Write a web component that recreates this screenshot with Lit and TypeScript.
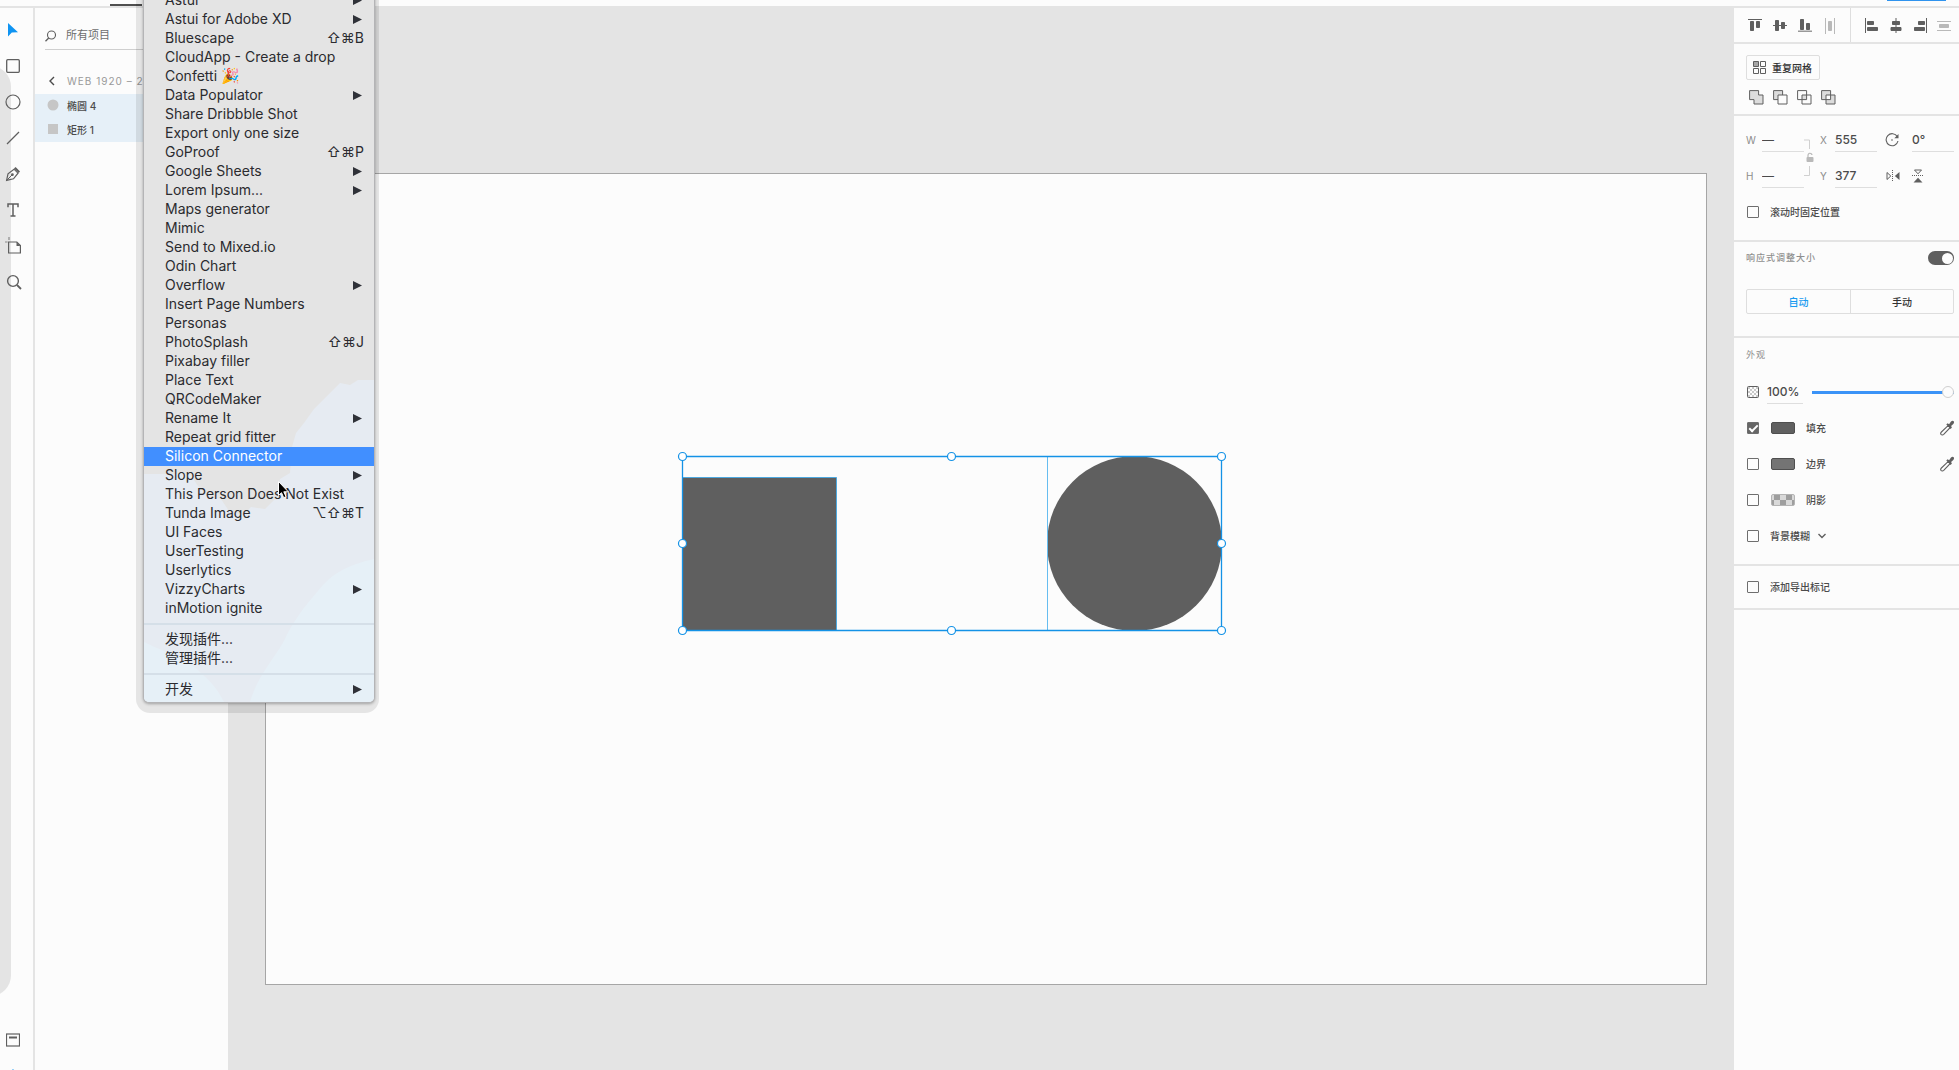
import { LitElement, html, svg, css, nothing, TemplateResult, SVGTemplateResult } from "lit";
import { customElement, property, state } from "lit/decorators.js";
import { classMap } from "lit/directives/class-map.js";

const icon = (w: number, h: number, body: SVGTemplateResult) =>
  html`<svg width=${w} height=${h} viewBox="0 0 ${w} ${h}" fill="none" aria-hidden="true">${body}</svg>`;

const INK = "#5f5f5f";
const PALE = "#b9b9b9";

const base = css`
  :host {
    font-family: Inter, "Noto Sans CJK SC", "Liberation Sans", sans-serif;
    color: #4b4b4b;
  }
  * {
    box-sizing: border-box;
  }
  button,
  input {
    font: inherit;
    color: inherit;
    margin: 0;
    padding: 0;
    border: 0;
    background: none;
    border-radius: 0;
    outline: none;
  }
  svg {
    display: block;
    flex: none;
  }
  h2 {
    margin: 0;
    font-weight: 400;
  }
`;

/* ---------- tool strip ---------- */

const tools: { name: string; art: TemplateResult }[] = [
  { name: "选择", art: icon(16, 16, svg`<path d="M3 1v13.500l3.800-4 6.200-.3z" fill="#0f94f2"/>`) },
  { name: "矩形", art: icon(16, 16, svg`<rect x="1.700" y="1.700" width="12.600" height="12.600" rx="1" stroke=${INK} stroke-width="1.300"/>`) },
  { name: "椭圆", art: icon(16, 16, svg`<circle cx="8" cy="8" r="7" stroke=${INK} stroke-width="1.200"/>`) },
  { name: "直线", art: icon(16, 16, svg`<path d="M2 14 14 2" stroke=${INK} stroke-width="1.200"/>`) },
  {
    name: "钢笔",
    art: icon(
      16,
      16,
      svg`<path d="M1.600 14.400 3 7.800 9 3.200l4 4-4.500 5.600z" stroke=${INK} stroke-width="1.200"/>
      <path d="M1.600 14.400 7 9" stroke=${INK}/><circle cx="7.400" cy="8.700" r="1.400" fill=${INK}/>
      <path d="m9 2.500 1.600-1.400 4.400 4.300-1.300 1.700z" fill=${INK}/>`,
    ),
  },
  {
    name: "文本",
    art: icon(16, 16, svg`<path d="M3 5.200V2h10v3.200M8 2v12M5.500 14h5" stroke=${INK} stroke-width="1.500"/>`),
  },
  {
    name: "画板",
    art: icon(
      20,
      18,
      svg`<path d="M5.600 5h8.200l3.600 3.600V16H5.600z" stroke=${INK} stroke-width="1.200"/>
      <path d="M13.500 5v3.900h3.900z" fill=${INK}/><path d="M6 0v3M2 5h2.600" stroke="#8a8a8a" stroke-width="1.200"/>`,
    ),
  },
  {
    name: "缩放",
    art: icon(18, 18, svg`<circle cx="9" cy="8" r="5.400" stroke=${INK} stroke-width="1.400"/><path d="m13 12 4 4" stroke=${INK} stroke-width="1.800"/>`),
  },
];

const footTools = [
  { name: "资源", art: icon(14, 14, svg`<rect x=".5" y="1" width="13" height="12" stroke=${INK} stroke-width="1.200"/><path d="M3 4.500h8" stroke=${INK} stroke-width="2"/>`) },
  { name: "图层", art: icon(14, 14, svg`<path d="M7 1 13 5 7 9 1 5zM1 8.500l6 4 6-4" stroke="#0f94f2" stroke-width="1.200"/>`) },
];

@customElement("tool-strip")
export class ToolStrip extends LitElement {
  static styles = [
    base,
    css`
      :host {
        display: flex;
        flex-direction: column;
        width: 35px;
        padding-top: 4px;
        border-right: 2px solid #e4e4e4;
        position: relative;
      }
      .edge {
        position: absolute;
        left: -30px;
        top: 58px;
        bottom: 74px;
        width: 41px;
        border-radius: 32px;
        background: #e4e4e4;
      }
      .tool {
        display: flex;
        align-items: center;
        justify-content: center;
        position: relative;
        width: 26px;
        height: 36px;
        flex: none;
      }
      .foot {
        margin-top: auto;
        margin-bottom: -24px;
      }
    `,
  ];
  render() {
    return html`<div class="edge"></div>
      ${tools.map((t) => html`<button class="tool" aria-label=${t.name}>${t.art}</button>`)}
      <div class="foot">${footTools.map((t) => html`<button class="tool" aria-label=${t.name}>${t.art}</button>`)}</div>`;
  }
}

/* ---------- layers ---------- */

@customElement("layer-panel")
export class LayerPanel extends LitElement {
  static styles = [
    base,
    css`
      :host {
        display: block;
        width: 193px;
        padding-top: 14px;
        font-size: 10px;
      }
      .search {
        display: flex;
        align-items: center;
        gap: 10px;
        height: 28px;
        margin: 0 10px;
        border-bottom: 1px solid #cfcfcf;
      }
      .search input {
        width: 100px;
        padding-bottom: 2px;
        font-size: 11px;
      }
      .search input::placeholder {
        color: #6e6e6e;
        opacity: 1;
      }
      .path {
        display: flex;
        align-items: center;
        gap: 12px;
        height: 26px;
        margin-top: 18px;
        padding-left: 14px;
        color: #999;
        letter-spacing: 1px;
      }
      .path h2 {
        font-size: 10px;
      }
      .layers {
        margin: 0;
        padding: 0;
        list-style: none;
        background: #e6f0f8;
      }
      .layer {
        display: flex;
        align-items: center;
        gap: 9px;
        width: 100%;
        height: 24px;
        padding-left: 13px;
        padding-bottom: 2px;
        font-weight: 500;
      }
      .mark {
        width: 10px;
        height: 10px;
        background: #c6c6c6;
      }
      .round {
        border-radius: 50%;
        transform: scale(1.1);
      }
    `,
  ];
  render() {
    return html`
      <label class="search">
        ${icon(11, 12, svg`<circle cx="6.500" cy="5" r="4" stroke=${INK} stroke-width="1.100"/><path d="M3.700 8 .5 11.300" stroke=${INK} stroke-width="1.300"/>`)}
        <input type="text" placeholder="所有项目" aria-label="所有项目" />
      </label>
      <div class="path">
        <button aria-label="返回">${icon(6, 10, svg`<path d="M5 1 1 5l4 4" stroke="#4b4b4b" stroke-width="1.400"/>`)}</button>
        <h2>WEB 1920 – 2</h2>
      </div>
      <ul class="layers">
        <li><button class="layer"><span class="mark round"></span>椭圆 4</button></li>
        <li><button class="layer"><span class="mark"></span>矩形 1</button></li>
      </ul>
    `;
  }
}

/* ---------- canvas ---------- */

@customElement("design-canvas")
export class DesignCanvas extends LitElement {
  static styles = [
    base,
    css`
      :host {
        display: flex;
        flex: 1;
        padding: 165px 27px 85px 37px;
        background: #e4e4e4;
      }
      .artboard {
        flex: 1;
        position: relative;
        border: 1px solid #a6a6a6;
        background: #fcfcfc;
      }
      .drawing {
        position: absolute;
        left: 408px;
        top: 274px;
      }
    `,
  ];
  render() {
    const handles = [
      [8, 8], [277, 8], [547, 8],
      [8, 95], [547, 95],
      [8, 182], [277, 182], [547, 182],
    ];
    return html`<main class="artboard">
      <svg class="drawing" width="556" height="192" viewBox="0 0 556 192" role="img" aria-label="矩形 1, 椭圆 4">
        <path d="M8.500 29.500h154v153h-154z" fill="#5f5f5f" stroke="#4da9e0" />
        <circle cx="460.500" cy="95.500" r="87.500" fill="#5f5f5f" />
        <path d="M373.500 8v174" stroke="#66bdf0" />
        <path d="M8.500 8.500h539v174h-539z" fill="none" stroke="#1492e6" stroke-width="1.300" />
        ${handles.map(([x, y]) => svg`<circle cx=${x + 0.5} cy=${y + 0.5} r="4" fill="#fff" stroke="#1492e6" stroke-width="1.200"/>`)}
      </svg>
    </main>`;
  }
}

/* ---------- inspector ---------- */

const bars = (line: string, rects: string, tone = INK, lineTone = tone) =>
  icon(14, 16, svg`<path d=${line} fill=${lineTone}/><path d=${rects} fill=${tone} stroke=${tone} stroke-linejoin="round"/>`);

const alignVertical = [
  { name: "顶对齐", art: bars("M0 1h14v1H0z", "M2.500 3.500h3v9h-3zM8.500 3.500h3v6h-3z") },
  { name: "垂直居中", art: bars("M0 7h14v1H0z", "M2.500 2.500h3v10h-3zM8.500 4.500h3v6h-3z") },
  { name: "底对齐", art: bars("M0 12.500h14v1.500H0z", "M2.500 1.500h3v10h-3zM8.500 5.500h3v6h-3z", INK, "#999") },
  { name: "水平分布", art: bars("M2 0h1v16H2zM11 0h1v16h-1z", "M5.500 3.500h3v9h-3z", PALE) },
];
const alignHorizontal = [
  { name: "左对齐", art: bars("M0 0h1v15H0z", "M2.500 3.500h6v3h-6zM2.500 9.500h10v3h-10z") },
  { name: "水平居中", art: bars("M6.500 0h1v15h-1z", "M3.500 3.500h7v3h-7zM2 9.500h10v3H2z") },
  { name: "右对齐", art: bars("M13 0h1v15h-1z", "M5.500 3.500h6v3h-6zM1.500 9.500h10v3h-10z") },
  { name: "垂直分布", art: bars("M0 3h14v1H0zM0 12h14v1H0z", "M2.500 6.500h9v3h-9z", PALE) },
];

const BACK = "M.6.600h9v9h-9z";
const FRONT = "M5 5h9v9H5z";
const booleans = [
  { name: "添加", art: icon(15, 15, svg`<path d="M.6.600h9V5H14v9H5V9.600H.6z" fill="#dcdcdc" stroke=${INK}/>`) },
  { name: "减去", art: icon(15, 15, svg`<path d=${BACK} fill="#dcdcdc" stroke=${INK}/><path d=${FRONT} fill="#fcfcfc" stroke=${INK}/>`) },
  { name: "交叉", art: icon(15, 15, svg`<path d="M5 5h4.600v4.600H5z" fill="#dcdcdc"/><path d=${BACK + FRONT} stroke=${INK}/>`) },
  { name: "排除重叠", art: icon(15, 15, svg`<path d=${BACK + FRONT} fill="#dcdcdc" fill-rule="evenodd" stroke=${INK}/>`) },
];

const dropper = icon(
  14,
  16,
  svg`<path d="m8.300 5.400 2 2-6.600 6.900c-.8.800-2 .9-2.600.2s-.5-1.700.3-2.500z" stroke=${INK} stroke-width="1.100"/>
  <path d="m6.300 4.600 1.300-1.300 1.500.9L11 1.600c1-1.100 2.200-.9 2.700-.3s.5 1.600-.4 2.600l-2.200 2 .8 1.600L10.600 9z" fill=${INK}/>`,
);

@customElement("inspector-panel")
export class InspectorPanel extends LitElement {
  @state() private mode = "auto";

  static styles = [
    base,
    css`
      :host {
        display: block;
        width: 225px;
        font-size: 10px;
        font-weight: 500;
        background: #fcfcfc;
      }
      section {
        border-bottom: 2px solid #e4e4e4;
        padding: 0 5px 0 12px;
      }
      .row {
        display: flex;
        align-items: center;
        height: 36px;
      }
      .align {
        display: flex;
        height: 36px;
        padding: 0;
      }
      .group {
        display: flex;
        align-items: center;
        padding-top: 2px;
        padding-left: 9px;
      }
      .group button {
        display: flex;
        justify-content: center;
        width: 24px;
      }
      .first {
        gap: 1px;
        width: 117px;
        border-right: 1px solid #dedede;
      }
      .shapes {
        padding-top: 11px;
        padding-bottom: 9px;
      }
      .grid {
        display: flex;
        align-items: center;
        gap: 6px;
        height: 25px;
        padding: 0 7px 0 6px;
        border: 1px solid #dedede;
        border-radius: 2px;
        color: #333;
      }
      .grid span {
        padding-bottom: 1px;
      }
      .booleans {
        display: flex;
        gap: 9px;
        padding: 10px 0 0 3px;
      }
      .transform {
        padding-top: 6px;
        padding-bottom: 10px;
      }
      .fields {
        display: grid;
        grid-template-columns: 16px 42px 14px 17px 42px 35px 42px;
        grid-template-rows: 36px 36px;
        align-items: center;
      }
      .fields label {
        color: #8c8c8c;
        font-weight: 400;
      }
      .narrow {
        padding-left: 2px;
      }
      .field {
        height: 24px;
        border-bottom: 1px solid #dedede;
        font-size: 12px;
        width: 100%;
      }
      .lock {
        grid-column: 3;
        grid-row: 1 / 3;
      }
      .spin {
        justify-self: center;
        margin-right: 4px;
      }
      .check {
        appearance: none;
        flex: none;
        display: grid;
        place-items: center;
        width: 12px;
        height: 12px;
        margin: 0 0 0 1px;
        border: 1px solid #6e6e6e;
        border-radius: 1px;
      }
      .check:checked {
        background: #666;
      }
      .check:checked::after {
        content: "";
        width: 7px;
        height: 3px;
        margin-top: -2px;
        border: solid #fff;
        border-width: 0 0 2px 2px;
        transform: rotate(-45deg);
      }
      .row label {
        padding-bottom: 1px;
      }
      .check + label {
        margin-left: 11px;
      }
      .muted {
        color: #8f8f8f;
        font-size: 9px;
        letter-spacing: 1px;
      }
      .resize {
        height: 96px;
      }
      .resize .row {
        height: 32px;
        justify-content: space-between;
      }
      .switch {
        appearance: none;
        display: flex;
        align-items: center;
        justify-content: flex-end;
        width: 26px;
        height: 14px;
        padding: 1px;
        border-radius: 7px;
        background: #5f5f5f;
      }
      .switch::after {
        content: "";
        width: 11px;
        height: 11px;
        border-radius: 50%;
        background: #fcfcfc;
      }
      .segments {
        display: grid;
        grid-template-columns: 1fr 1fr;
        height: 25px;
        margin-top: 15px;
        border: 1px solid #dedede;
        border-radius: 2px;
        color: #333;
      }
      .segments button + button {
        border-left: 1px solid #dedede;
      }
      .segments .on {
        color: #1a9bf0;
      }
      .look {
        padding-bottom: 10px;
      }
      .title {
        height: 36px;
        line-height: 34px;
      }
      .opacity .field {
        width: 36px;
        margin: 0 9px 0 8px;
      }
      .opacity svg {
        margin-left: 1px;
      }
      .slider {
        appearance: none;
        flex: 1;
        min-width: 0;
        height: 12px;
        background: linear-gradient(#3b93f7, #3b93f7) 0 5px / 100% 3px no-repeat;
      }
      .slider::-webkit-slider-thumb {
        appearance: none;
        width: 12px;
        height: 12px;
        border: 1px solid #cfcfcf;
        border-radius: 50%;
        background: #fcfcfc;
      }
      .swatch {
        width: 24px;
        height: 12px;
        margin-left: 12px;
        border: 1px solid #4f4f4f;
        border-radius: 2px;
        background: #606060;
      }
      .border {
        background: #747474;
      }
      .shadow {
        border-color: #b4b4b4;
        background: repeating-conic-gradient(#9e9e9e 0 25%, #d9d9d9 0 50%) 2px 5px / 12px 12px;
      }
      .swatch + label {
        margin-left: 11px;
      }
      .pick {
        margin-left: auto;
      }
      .more {
        margin-left: 8px;
      }
      .export .row {
        height: 42px;
      }
    `,
  ];

  private paint(id: string, name: string, on: boolean, pick: boolean) {
    return html`<div class="row">
      <input class="check" type="checkbox" id=${id} .checked=${on} />
      <button class="swatch ${id}" aria-label="${name}颜色"></button>
      <label for=${id}>${name}</label>
      ${pick ? html`<button class="pick" aria-label="吸管">${dropper}</button>` : nothing}
    </div>`;
  }

  private buttons(list: { name: string; art: TemplateResult }[]) {
    return list.map((b) => html`<button aria-label=${b.name}>${b.art}</button>`);
  }

  render() {
    return html`
      <section class="align">
        <div class="group first">${this.buttons(alignVertical)}</div>
        <div class="group">${this.buttons(alignHorizontal)}</div>
      </section>

      <section class="shapes">
        <button class="grid">
          ${icon(
            13,
            13,
            svg`<path d="M.5.500h5v5h-5z" fill="#a6a6a6" stroke=${INK}/><path d="M7.500.500h5v5h-5zM.5 7.500h5v5h-5zM7.500 7.500h5v5h-5z" stroke=${INK}/>`,
          )}
          <span>重复网格</span>
        </button>
        <div class="booleans">${this.buttons(booleans)}</div>
      </section>

      <section class="transform">
        <div class="fields">
          <label for="w">W</label><input class="field" id="w" value="—" />
          <div class="lock">
            ${icon(
              12,
              38,
              svg`<path d="M0 1h5.500v9M0 36.500h5.500V27" stroke="#d0d0d0"/><rect x="2.500" y="18" width="7" height="5" rx="1" fill=${PALE}/>
              <path d="M4 18.500v-2a2 2 0 0 1 4-.5" stroke=${PALE} stroke-width="1.200"/>`,
            )}
          </div>
          <label class="narrow" for="x">X</label><input class="field" id="x" value="555" />
          <label class="spin" for="r" aria-label="旋转">
            ${icon(
              15,
              14,
              svg`<path d="M12.300 3.600A6 6 0 1 0 13 8" stroke=${INK} stroke-width="1.100"/><path d="M13.500 1v4.300H9.300z" fill=${INK}/><circle cx="7" cy="7" r=".8" fill=${INK}/>`,
            )}
          </label>
          <input class="field" id="r" value="0°" />
          <label for="h">H</label><input class="field" id="h" value="—" />
          <label class="narrow" for="y">Y</label><input class="field" id="y" value="377" />
          <button class="spin" aria-label="水平翻转">
            ${icon(14, 12, svg`<path d="M1 2.500v7L4.800 6z" stroke=${INK}/><path d="M13.500 2v8L8.800 6z" fill=${INK}/><path d="M6.500 0v12" stroke=${INK} stroke-dasharray="1 1"/>`)}
          </button>
          <button aria-label="垂直翻转">
            ${icon(12, 14, svg`<path d="M2.500 1h7L6 4.800z" stroke=${INK}/><path d="M1.500 13.500h9L6 8.800z" fill=${INK}/><path d="M0 6.500h12" stroke=${INK} stroke-dasharray="1 1"/>`)}
          </button>
        </div>
        <div class="row">
          <input class="check" type="checkbox" id="pin" /><label for="pin">滚动时固定位置</label>
        </div>
      </section>

      <section class="resize">
        <div class="row">
          <label class="muted" for="responsive">响应式调整大小</label>
          <input class="switch" type="checkbox" role="switch" id="responsive" checked />
        </div>
        <div class="segments">
          <button class=${classMap({ on: this.mode === "auto" })} @click=${() => (this.mode = "auto")}>自动</button>
          <button class=${classMap({ on: this.mode === "manual" })} @click=${() => (this.mode = "manual")}>手动</button>
        </div>
      </section>

      <section class="look">
        <h2 class="muted title">外观</h2>
        <div class="row opacity">
          ${icon(
            12,
            12,
            svg`<path d="M1 1h2v2H1zM5 1h2v2H5zM9 1h2v2H9zM3 3h2v2H3zM7 3h2v2H7zM1 5h2v2H1zM5 5h2v2H5zM9 5h2v2H9zM3 7h2v2H3zM7 7h2v2H7zM1 9h2v2H1zM5 9h2v2H5zM9 9h2v2H9z" fill="#c9c9c9"/>
            <rect x=".5" y=".5" width="11" height="11" rx="1" stroke=${INK}/>`,
          )}
          <input class="field" value="100%" aria-label="不透明度" />
          <input class="slider" type="range" min="0" max="100" value="100" aria-label="不透明度" />
        </div>
        ${this.paint("fill", "填充", true, true)} ${this.paint("border", "边界", false, true)}
        ${this.paint("shadow", "阴影", false, false)}
        <div class="row">
          <input class="check" type="checkbox" id="blur" /><label for="blur">背景模糊</label>
          <button class="more" aria-label="模糊类型">${icon(8, 6, svg`<path d="m.5 1 3.500 3.500L7.500 1" stroke=${INK} stroke-width="1.400"/>`)}</button>
        </div>
      </section>

      <section class="export">
        <div class="row">
          <input class="check" type="checkbox" id="export" /><label for="export">添加导出标记</label>
        </div>
      </section>
    `;
  }
}

/* ---------- plugin menu ---------- */

type Entry = { text: string; keys?: string; sub?: boolean; emoji?: string };
const sub = (text: string): Entry => ({ text, sub: true });
const key = (text: string, keys: string): Entry => ({ text, keys });
const item = (text: string): Entry => ({ text });

const menuGroups: Entry[][] = [
  [
    sub("Astui"),
    sub("Astui for Adobe XD"),
    key("Bluescape", "⇧⌘B"),
    item("CloudApp - Create a drop"),
    { text: "Confetti", emoji: "🎉" },
    sub("Data Populator"),
    item("Share Dribbble Shot"),
    item("Export only one size"),
    key("GoProof", "⇧⌘P"),
    sub("Google Sheets"),
    sub("Lorem Ipsum..."),
    item("Maps generator"),
    item("Mimic"),
    item("Send to Mixed.io"),
    item("Odin Chart"),
    sub("Overflow"),
    item("Insert Page Numbers"),
    item("Personas"),
    key("PhotoSplash", "⇧⌘J"),
    item("Pixabay filler"),
    item("Place Text"),
    item("QRCodeMaker"),
    sub("Rename It"),
    item("Repeat grid fitter"),
    item("Silicon Connector"),
    sub("Slope"),
    item("This Person Does Not Exist"),
    key("Tunda Image", "⌥⇧⌘T"),
    item("UI Faces"),
    item("UserTesting"),
    item("Userlytics"),
    sub("VizzyCharts"),
    item("inMotion ignite"),
  ],
  [item("发现插件..."), item("管理插件...")],
  [sub("开发")],
];

@customElement("plugin-menu")
export class PluginMenu extends LitElement {
  @property() active = "";

  static styles = [
    base,
    css`
      :host {
        display: block;
        font-size: 14px;
        color: #2b2b2f;
      }
      .menu {
        position: relative;
        width: 232px;
        padding-bottom: 3px;
        border: 1px solid #b4b4b6;
        border-top: 0;
        border-radius: 0 0 6px 6px;
        background: #e4e4e4;
        box-shadow: 0 1px 3px rgba(0, 0, 0, 0.3);
      }
      .halo {
        position: absolute;
        inset: 0 -4px -10px -7px;
        border-radius: 0 0 14px 14px;
        background: rgba(0, 0, 0, 0.09);
      }
      .tint {
        position: absolute;
        left: 0;
        bottom: 0;
        border-radius: 0 0 5px 5px;
      }
      .group {
        position: relative;
        margin: 0;
        padding: 0;
        list-style: none;
      }
      .group + .group {
        padding-top: 12px;
      }
      .group + .group::before {
        content: "";
        position: absolute;
        top: 5px;
        left: 0;
        right: 0;
        height: 2px;
        background: #d5dfe8;
      }
      .entry {
        display: flex;
        align-items: center;
        justify-content: space-between;
        width: 100%;
        height: 19px;
        padding: 0 12px 0 21px;
        line-height: 17px;
        white-space: nowrap;
      }
      .text {
        display: flex;
        gap: 4px;
        padding-bottom: 2px;
      }
      .emoji {
        font-size: 15px;
      }
      .active {
        background: #418fff;
        color: #fff;
      }
      .keys {
        margin-right: -2px;
        padding-bottom: 2px;
        font-family: Inter, "DejaVu Sans", sans-serif;
      }
    `,
  ];

  render() {
    return html`
      <div class="halo"></div>
      <nav class="menu">
        <svg class="tint" width="230" height="322" viewBox="0 0 230 322">
          <path d="M230 0h-16l-8 5-10-2-14 14-12 12-10 14-8 10-4 14-2 26-10 6-3 18-12 12-14-2-8 8-14-4-8-12-14-3-9-10-8-12H0v228h230z" fill="#e6ebf2" />
          <path d="M230 179c-26 6-42 14-56 32-14 16-26 32-34 50-10 18-26 34-34 61h124z" fill="#e6f0f7" />
          <path d="M0 262c20 10 46 18 58 32 12 10 18 20 22 28H0z" fill="#e6f0f7" />
        </svg>
        ${menuGroups.map(
          (group) => html`<ul class="group">
            ${group.map(
              (e) => html`<li>
                <button class=${classMap({ entry: true, active: e.text === this.active })}>
                  <span class="text">${e.text}${e.emoji ? html`<span class="emoji">${e.emoji}</span>` : nothing}</span>
                  ${e.keys ? html`<span class="keys">${e.keys}</span>` : nothing}
                  ${e.sub ? icon(9, 9, svg`<path d="M0 0v9l9-4.500z" fill="#2f3138"/>`) : nothing}
                </button>
              </li>`,
            )}
          </ul>`,
        )}
      </nav>
    `;
  }
}

/* ---------- window ---------- */

@customElement("app-root")
export class AppRoot extends LitElement {
  static styles = [
    base,
    css`
      :host {
        display: flex;
        flex-direction: column;
        position: relative;
        height: 100vh;
        overflow: hidden;
        background: #fcfcfc;
      }
      .top {
        display: flex;
        justify-content: space-between;
        align-items: flex-end;
        height: 8px;
        flex: none;
        padding: 0 13px 0 110px;
        border-bottom: 2px solid #e4e4e4;
      }
      .tab {
        width: 32px;
        height: 2px;
        background: #4f4f4f;
      }
      .share {
        width: 59px;
        height: 1px;
        margin-bottom: 5px;
        background: #2f93ee;
      }
      .body {
        display: flex;
        flex: 1;
        min-height: 0;
      }
      .overlay {
        position: absolute;
        left: 143px;
        top: -9px;
      }
      .cursor {
        position: absolute;
        left: 277px;
        top: 480px;
      }
    `,
  ];
  render() {
    return html`
      <header class="top">
        <span class="tab"></span>
        <span class="share"></span>
      </header>
      <div class="body">
        <tool-strip></tool-strip>
        <layer-panel></layer-panel>
        <design-canvas></design-canvas>
        <inspector-panel></inspector-panel>
      </div>
      <plugin-menu class="overlay" active="Silicon Connector"></plugin-menu>
      <svg class="cursor" width="13" height="19" viewBox="0 0 13 19" aria-hidden="true">
        <path d="M1.500 1.500v14l3-2.800 2.200 5 2.300-1-2.200-4.900h4.500z" fill="#000" stroke="#fff" />
      </svg>
    `;
  }
}
